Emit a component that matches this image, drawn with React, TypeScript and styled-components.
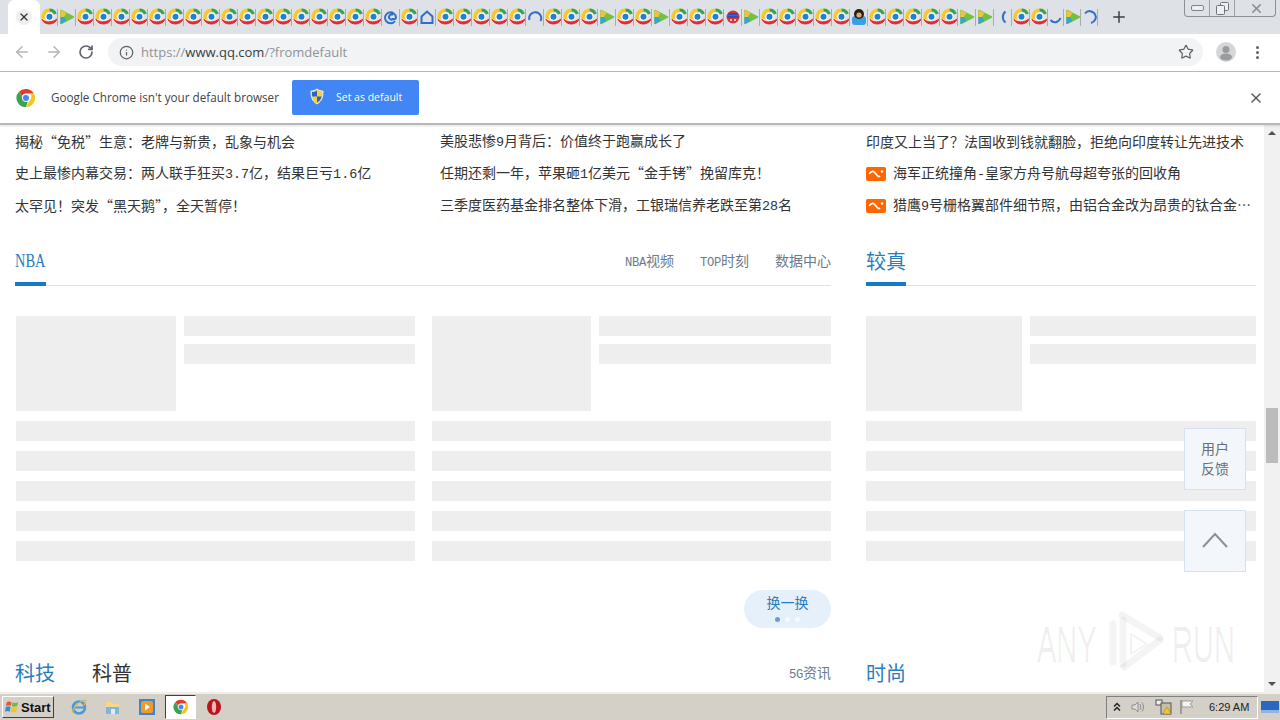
import React from 'react';
import styled, { createGlobalStyle } from 'styled-components';
import { ArrowLeft, ArrowRight, RotateCw, Info, Star, X, Plus } from 'lucide-react';

const CJK = `"Noto Sans CJK SC", "Liberation Sans", sans-serif`;
const MONO = `"Liberation Mono", "Noto Sans CJK SC", monospace`;
const UI = `"Open Sans", "Liberation Sans", sans-serif`;

const Global = createGlobalStyle`
  html, body { margin: 0; padding: 0; background: #fff; }
  * { box-sizing: border-box; }
`;

const Screen = styled.div`
  width: 1280px;
  height: 720px;
  display: flex;
  flex-direction: column;
  overflow: hidden;
  font-family: ${CJK};
`;

/* browser chrome */
const TabStrip = styled.div`
  height: 34px;
  flex: none;
  display: flex;
  background: #dee1e6;
  padding-left: 8px;
`;
const ActiveTab = styled.div`
  width: 32px;
  height: 34px;
  background: #fff;
  border-radius: 6px 6px 0 0;
  display: flex;
  align-items: center;
  justify-content: center;
  color: #333;
`;
const CloseDot = styled.div`
  width: 16px;
  height: 16px;
  border-radius: 50%;
  background: #eceef0;
  display: flex;
  align-items: center;
  justify-content: center;
`;
const IconTab = styled.div<{ $w?: number }>`
  width: ${(p) => p.$w ?? 18}px;
  height: 34px;
  flex: none;
  display: flex;
  align-items: center;
  justify-content: center;
  position: relative;
  &::after {
    content: '';
    position: absolute;
    right: 0;
    top: 9px;
    width: 1px;
    height: 17px;
    background: #a7abb2;
  }
`;
const NewTab = styled.div`
  width: 20px;
  height: 34px;
  margin-left: 11px;
  display: flex;
  align-items: center;
  justify-content: center;
  color: #3c4043;
`;
const WindowButtons = styled.div`
  margin-left: auto;
  margin-right: 4px;
  width: 92px;
  height: 17px;
  display: grid;
  grid-template-columns: 25px 25px 42px;
  border: 1px solid #8b8f96;
  border-top: none;
  border-radius: 0 0 4px 4px;
`;
const WindowButton = styled.div`
  display: flex;
  align-items: center;
  justify-content: center;
  border-right: 1px solid #9ca0a7;
  &:last-child { border-right: none; }
`;
const Toolbar = styled.div`
  height: 38px;
  flex: none;
  display: flex;
  align-items: center;
  background: #fff;
  border-bottom: 1px solid #b9b9b9;
  padding-bottom: 1px;
`;
const NavButton = styled.div<{ $dim?: boolean }>`
  width: 32px;
  height: 28px;
  display: flex;
  align-items: center;
  justify-content: center;
  color: ${(p) => (p.$dim ? '#b3b6ba' : '#5f6368')};
`;
const NavGroup = styled.div`
  width: 108px;
  padding-left: 6px;
  display: flex;
`;
const Omnibox = styled.div`
  width: 1095px;
  height: 28px;
  border-radius: 14px;
  background: #f1f3f4;
  display: flex;
  align-items: center;
  padding: 0 9px 0 11px;
  color: #5f6368;
`;
const Url = styled.div`
  margin: -1px 0 0 7px;
  font-family: ${UI};
  font-size: 13px;
  color: #90949a;
  b { font-weight: 400; color: #3a3d40; }
`;
const StarSlot = styled.div`
  margin-left: auto;
  display: flex;
`;
const Avatar = styled.div`
  width: 20px;
  height: 20px;
  margin-left: 13px;
  border-radius: 50%;
  background: #d5d6d8;
  overflow: hidden;
  display: flex;
`;
const MenuDots = styled.div`
  margin-left: 20px;
  display: flex;
  flex-direction: column;
  gap: 2px;
  i { width: 3px; height: 3px; border-radius: 50%; background: #5f6368; display: block; }
`;
const InfoBar = styled.div`
  height: 53px;
  flex: none;
  position: relative;
  z-index: 2;
  display: flex;
  align-items: center;
  padding: 0 16px;
  background: #fff;
  border-bottom: 2px solid #b8b8b8;
  box-shadow: 0 1px 2px rgba(0, 0, 0, 0.12);
`;
const InfoText = styled.div`
  margin: 0 0 2px 15px;
  width: 228px;
  font-family: ${UI};
  font-size: 11.7px;
  color: #444;
  white-space: nowrap;
`;
const DefaultButton = styled.div`
  margin-left: 13px;
  width: 127px;
  height: 35px;
  border-radius: 2px;
  background: #4285f4;
  color: #fff;
  display: flex;
  align-items: center;
  padding: 0 0 2px 17px;
  font-family: ${UI};
  font-size: 10.5px;
  gap: 11px;
`;
const InfoClose = styled.div`
  margin-left: auto;
  display: flex;
  color: #5a5a5a;
`;

/* page */
const PageArea = styled.div`
  flex: 1;
  min-height: 0;
  display: flex;
  position: relative;
  background: #fff;
`;
const Content = styled.div`
  width: 1264px;
  padding-left: 15px;
  overflow: hidden;
`;
const NewsRow = styled.div`
  display: grid;
  grid-template-columns: 425px 426px 386px;
`;
const NewsColumn = styled.div`
  min-width: 0;
`;
const NewsItem = styled.div`
  height: 32px;
  padding-top: 1px;
  line-height: 31px;
  font-size: 14px;
  color: #333;
  display: flex;
  align-items: center;
  white-space: nowrap;
`;
const NewsText = styled.span`
  min-width: 0;
  overflow: hidden;
  text-overflow: ellipsis;
`;
const Latin = styled.span`
  font-family: ${MONO};
  font-size: 13.4px;
`;
const SmallLatin = styled.span`
  font-family: ${MONO};
  font-size: 12.2px;
  letter-spacing: -0.3px;
`;
const PlayBadge = styled.span`
  width: 20px;
  height: 14px;
  flex: none;
  margin-right: 7px;
  border-radius: 2px;
  background: #f60;
  display: flex;
  align-items: center;
  justify-content: center;
`;
const Sections = styled.div`
  display: grid;
  grid-template-columns: 816px 390px;
  column-gap: 35px;
  margin-top: 17px;
`;
const HeaderRow = styled.div<{ $top?: number }>`
  height: 48px;
  margin-top: ${(p) => p.$top ?? 0}px;
  display: flex;
  border-bottom: 1px solid #d8e3ef;
`;
const Title = styled.div<{ $muted?: boolean; $off?: boolean }>`
  height: 48px;
  line-height: 45px;
  font-size: 20px;
  color: ${(p) => (p.$muted ? '#333' : '#2b7cbc')};
  margin-right: ${(p) => (p.$off ? 0 : 37)}px;
  border-bottom: ${(p) => (p.$off ? 'none' : '4px solid #1478ce')};
`;
const LatinTitle = styled(Title)`
  width: 31px;
  font-family: "Liberation Serif", serif;
  font-size: 19px;
  line-height: 46px;
  span {
    display: inline-block;
    transform: scaleX(0.76);
    transform-origin: left center;
  }
`;
const HeaderLinks = styled.div`
  margin-left: auto;
  display: flex;
  gap: 26px;
  line-height: 45px;
  font-size: 14px;
  color: #6b7b8c;
`;
const Blocks = styled.div`
  display: flex;
  gap: 17px;
  padding-left: 1px;
`;
const Block = styled.div<{ $wide?: boolean }>`
  width: ${(p) => (p.$wide ? '390px' : '399px')};
  padding-top: 30px;
  display: flex;
  flex-direction: column;
  gap: 10px;
`;
const MediaRow = styled.div`
  display: flex;
  gap: 8px;
`;
const Thumb = styled.div<{ $w: number }>`
  width: ${(p) => p.$w}px;
  height: 95px;
  flex: none;
  background: #eee;
`;
const MediaBars = styled.div`
  flex: 1;
  display: flex;
  flex-direction: column;
  gap: 8px;
`;
const Bar = styled.div`
  height: 20px;
  background: #eee;
`;
const PillRow = styled.div`
  display: flex;
  justify-content: flex-end;
  margin-top: 29px;
`;
const Pill = styled.div`
  width: 87px;
  height: 38px;
  border-radius: 19px;
  background: #e6f0fa;
  color: #2b7cbc;
  font-size: 14px;
  line-height: 14px;
  padding-top: 5px;
  text-align: center;
`;
const PillDots = styled.div`
  display: flex;
  justify-content: center;
  gap: 5px;
  margin-top: 8px;
`;
const PillDot = styled.i<{ $on?: boolean }>`
  width: 5px;
  height: 5px;
  border-radius: 50%;
  display: block;
  background: ${(p) => (p.$on ? '#6f9bd6' : '#f6f9fd')};
`;

/* scrollbar */
const ScrollTrack = styled.div`
  width: 16px;
  flex: none;
  background: #f1f1f1;
  display: flex;
  flex-direction: column;
  align-items: center;
`;
const ScrollArrow = styled.div<{ $down?: boolean }>`
  width: 16px;
  height: 16px;
  flex: none;
  margin-top: ${(p) => (p.$down ? 'auto' : '0')};
  display: flex;
  align-items: center;
  justify-content: center;
  &::before {
    content: '';
    border-left: 4px solid transparent;
    border-right: 4px solid transparent;
    ${(p) => (p.$down ? 'border-top: 4px solid #505050;' : 'border-bottom: 4px solid #505050;')}
  }
`;
const ScrollThumb = styled.div`
  width: 12px;
  height: 55px;
  margin-top: 267px;
  background: #bcbcbc;
`;

/* floating parts */
const FloatBox = styled.div<{ $top: number }>`
  position: absolute;
  left: 1184px;
  top: ${(p) => p.$top}px;
  width: 62px;
  height: 62px;
  padding-bottom: 3px;
  background: #f3f7fc;
  border: 1px solid #d6e1ef;
  display: flex;
  align-items: center;
  justify-content: center;
  font-size: 14px;
  line-height: 20px;
  color: #6a6f75;
  text-align: center;
`;
const Watermark = styled.div`
  position: absolute;
  left: 1037px;
  top: 485px;
  height: 62px;
  display: flex;
  align-items: center;
  gap: 7px;
  pointer-events: none;
`;
const WatermarkWord = styled.div`
  width: 63px;
  margin-top: 8px;
  span {
    display: inline-block;
    font-family: "Liberation Sans", sans-serif;
    font-size: 50px;
    line-height: 50px;
    white-space: nowrap;
    color: rgba(0, 0, 0, 0.06);
    -webkit-text-stroke: 1px rgba(0, 0, 0, 0.05);
    transform: scaleX(0.58);
    transform-origin: left center;
  }
`;

/* taskbar */
const Taskbar = styled.div`
  height: 28px;
  flex: none;
  display: flex;
  align-items: center;
  background: #d4d0c8;
  border-top: 2px solid #f1efe9;
`;
const StartButton = styled.div`
  width: 52px;
  height: 22px;
  margin-left: 2px;
  display: flex;
  align-items: center;
  padding-left: 1px;
  border: 1px solid;
  border-color: #fff #404040 #404040 #fff;
  font-family: "Liberation Sans", sans-serif;
  font-weight: 700;
  font-size: 13px;
  color: #111;
`;
const QuickLaunch = styled.div`
  margin-left: 8px;
  display: flex;
  align-items: center;
`;
const QuickItem = styled.div<{ $active?: boolean; $w?: number }>`
  width: ${(p) => p.$w ?? 34}px;
  height: 24px;
  display: flex;
  align-items: center;
  justify-content: center;
  ${(p) =>
    p.$active
      ? 'background: #fff; border: 1px solid; border-color: #404040 #fff #fff #404040; margin-left: 1px;'
      : ''}
`;
const Tray = styled.div`
  margin-left: auto;
  width: 152px;
  height: 23px;
  display: flex;
  align-items: center;
  border: 1px solid;
  border-color: #808080 #fff #fff #808080;
  padding-left: 6px;
`;
const TrayIcon = styled.div<{ $w: number }>`
  width: ${(p) => p.$w}px;
  display: flex;
  justify-content: center;
`;
const Clock = styled.div`
  margin-left: 8px;
  font-family: "Liberation Sans", sans-serif;
  font-size: 11px;
  color: #222;
  white-space: nowrap;
`;
const DesktopSlot = styled.div`
  margin: 0 1px 0 3px;
  display: flex;
`;

/* drawings */
const QQ = () => (
  <svg width="17" height="18" viewBox="0 0 17 18">
    <path d="M2.4 11C1 6 4.5 2.2 8.5 2.2" fill="none" stroke="#f4c92e" strokeWidth="3.4" />
    <path d="M8.5 2c2.800 0 4.800 1.400 5.800 4" fill="none" stroke="#3aa34a" strokeWidth="3.2" />
    <circle cx="8.5" cy="8.8" r="4" fill="#fff" />
    <circle cx="8.5" cy="8.8" r="3" fill="#1c82d0" />
    <path d="M1 11.500c3 3 10 3.600 15-.5-1.500 5.800-12 7.200-15 .5z" fill="#e42a2a" stroke="#e42a2a" />
  </svg>
);
const Play = () => (
  <svg width="16" height="18" viewBox="0 0 16 18">
    <path d="M2 2.500L14.500 9 2 15.500z" fill="#74c044" stroke="#74c044" strokeWidth="1.5" strokeLinejoin="round" />
    <path d="M1.500 2l6 3.100L5 9H1.500z" fill="#f3c23c" />
    <path d="M1.500 16l6-3.100L5 9H1.500z" fill="#36a4d8" />
  </svg>
);
const Arc = ({ d }: { d: string }) => (
  <svg width="16" height="18" viewBox="0 0 16 18">
    <path d={d} fill="none" stroke="#2f6fcb" strokeWidth="2" />
  </svg>
);
const Ball = () => (
  <svg width="16" height="18" viewBox="0 0 16 18">
    <circle cx="8" cy="9" r="6.5" fill="#d8323f" />
    <path d="M3 6h10M2.500 9h11" stroke="#2a52b8" strokeWidth="2" />
    <circle cx="6" cy="12" r="1" fill="#fff" />
    <circle cx="10" cy="12" r="1" fill="#fff" />
  </svg>
);
const Person = () => (
  <svg width="16" height="18" viewBox="0 0 16 18">
    <rect x="1" y="8" width="14" height="9" rx="3" fill="#35a0e6" />
    <circle cx="8" cy="6" r="5" fill="#2a1c10" />
    <circle cx="8" cy="7" r="2.6" fill="#e0a878" />
  </svg>
);

const tabIcon = (k: string) => {
  if (k === 'p') return <Play />;
  if (k === 'a') return <Arc d="M12 13a5.500 5.500 0 1 1 1-3.500c0 2-3 2.500-3 .5M10 7a2.500 2.500 0 1 0 0 4" />;
  if (k === 'h') return <Arc d="M2.500 8.500L8 3.500l5.500 5v6.500h-11z" />;
  if (k === 'c') return <Arc d="M2.500 12a6 6 0 1 1 11 1" />;
  if (k === 'l') return <Arc d="M10.500 3.500a7 7 0 0 0 0 11" />;
  if (k === 'j') return <Arc d="M2.500 12c3 3.500 8 3 10-2" />;
  if (k === 'o') return <Arc d="M3 5.500a6 6 0 1 1 6 9.500" />;
  if (k === 'r') return <Ball />;
  if (k === 'u') return <Person />;
  return <QQ />;
};

const TABS = 'qp' + 'q'.repeat(17) + 'aqhqqqqqcqqqpqqpqqqrpqqqqquqqqqqpplqqjpo';

const ChromeLogo = ({ size }: { size: number }) => (
  <svg width={size} height={size} viewBox="0 0 20 20">
    <path d="M10 1a9 9 0 0 1 7.800 4.500H10a4.500 4.500 0 0 0-4.200 2.900L3 3.800A9 9 0 0 1 10 1z" fill="#e33b2e" />
    <path d="M17.800 5.500A9 9 0 0 1 10 19l3.900-6.800a4.500 4.500 0 0 0 0-6.700z" fill="#f5c518" />
    <path d="M10 19A9 9 0 0 1 3 3.800l3.900 6.700a4.500 4.500 0 0 0 4.900 3.100z" fill="#3ba350" />
    <circle cx="10" cy="10" r="3.6" fill="#4285f4" stroke="#fff" strokeWidth="1" />
  </svg>
);
const Shield = () => (
  <svg width="16" height="17" viewBox="0 0 16 17">
    <path d="M8 1c2 1.500 4 2 6 2 0 6-1 10-6 13C3 13 2 9 2 3c2 0 4-.5 6-2z" fill="#f6d23c" stroke="#e8eef8" />
    <path d="M8 2.500v6H3.200C3 6.500 3 5 3 4c2 0 3.500-.5 5-1.500zM8 8.500h4.600c-.5 2.500-2 4.500-4.600 6z" fill="#2d63c8" />
  </svg>
);
const WaveBadge = () => (
  <svg width="16" height="10" viewBox="0 0 16 10">
    <path d="M1 5c3-4 5-3 7 0s3 3 4 2" fill="none" stroke="#fff" strokeWidth="1.6" />
    <circle cx="14" cy="2.5" r="1.2" fill="#fff" />
  </svg>
);
const TopChevron = () => (
  <svg width="26" height="16" viewBox="0 0 26 16">
    <path d="M1 15L13 2l12 13" fill="none" stroke="#8c8f93" strokeWidth="2" />
  </svg>
);
const WatermarkLogo = () => (
  <svg width="58" height="62" viewBox="0 0 58 62" fill="none" strokeLinecap="round" strokeLinejoin="round">
    <g stroke="rgba(0,0,0,.045)" strokeWidth="7">
      <path d="M6 14v38" />
      <path d="M15 5l38 23" />
      <path d="M53 30L17 57" />
      <path d="M16 10v44" />
    </g>
    <path d="M24 24v20l16-10z" stroke="rgba(0,0,0,.05)" strokeWidth="2" />
  </svg>
);
const WinFlag = () => (
  <svg width="17" height="16" viewBox="0 0 18 16">
    <path d="M3 3c2-1 3-1 5 0l-1 4c-2-1-3-1-5 0z" fill="#e8562a" />
    <path d="M9 3c2 1 3 1 6 0l-1 4c-2 1-4 1-6 0z" fill="#7cb83a" />
    <path d="M2 8c2-1 3-1 5 0l-1 5c-2-1-3-1-5 0z" fill="#3b88d6" />
    <path d="M8 8c2 1 4 1 6 0l-1 5c-2 1-4 1-6 0z" fill="#f2c230" />
  </svg>
);
const IeIcon = () => (
  <svg width="18" height="18" viewBox="0 0 18 18">
    <circle cx="9" cy="9.5" r="6" fill="none" stroke="#4a9ad8" strokeWidth="2.6" />
    <path d="M3 9.500h12" stroke="#4a9ad8" strokeWidth="2" />
    <path d="M3 15C1 12 9 3 15 2c2 1 0 4-1 5" fill="none" stroke="#e4b63a" strokeWidth="1.2" />
  </svg>
);
const FolderIcon = () => (
  <svg width="18" height="18" viewBox="0 0 18 18">
    <path d="M2 4h5l2 2h6v9H2z" fill="#f3d98a" />
    <path d="M2 9h13v7H2z" fill="#7db8dc" />
    <rect x="7" y="11" width="4" height="5" fill="#dcecf5" />
  </svg>
);
const MediaIcon = () => (
  <svg width="18" height="18" viewBox="0 0 18 18">
    <rect x="1" y="1" width="16" height="16" fill="#3f86c8" />
    <rect x="3" y="3" width="12" height="12" rx="2" fill="#f09a2a" />
    <path d="M7 5.500l5 3.500-5 3.500z" fill="#fff" />
  </svg>
);
const OperaIcon = () => (
  <svg width="16" height="18" viewBox="0 0 16 18">
    <ellipse cx="8" cy="9" rx="7" ry="8" fill="#b8141c" />
    <ellipse cx="8" cy="9" rx="2.2" ry="6" fill="#f0b4b4" />
  </svg>
);
const TrayChevrons = () => (
  <svg width="8" height="10" viewBox="0 0 8 10" fill="none" stroke="#222" strokeWidth="1.5">
    <path d="M1 4.500L4 1.500l3 3M1 8.500l3-3 3 3" />
  </svg>
);
const Speaker = () => (
  <svg width="16" height="16" viewBox="0 0 16 16" fill="none" stroke="#8f8f8f">
    <path d="M2 6h3l3-3v10l-3-3H2z" fill="#ddd" />
    <path d="M10 5c1 2 1 4 0 6M12 3.500c2 3 2 6 0 9" />
  </svg>
);
const NetworkIcon = () => (
  <svg width="18" height="18" viewBox="0 0 18 18">
    <rect x="1" y="2" width="6" height="5" fill="#eee" stroke="#555" />
    <rect x="6" y="5" width="10" height="11" fill="#c4c0a8" stroke="#555" />
    <path d="M12 9l4 7H8z" fill="#f6c81e" stroke="#9a7a10" strokeWidth=".5" />
  </svg>
);
const FlagIcon = () => (
  <svg width="16" height="16" viewBox="0 0 16 16">
    <path d="M2 1v14" stroke="#666" />
    <path d="M3 2h11l-3 3 3 3H3z" fill="#f4f4f4" stroke="#999" />
  </svg>
);
const DesktopIcon = () => (
  <svg width="18" height="12" viewBox="0 0 18 12">
    <rect width="18" height="12" fill="#2b66c0" />
    <rect y="9" width="18" height="3" fill="#8fb4e4" />
  </svg>
);

const Skeleton = ({ thumb }: { thumb: number }) => (
  <>
    <MediaRow>
      <Thumb $w={thumb} />
      <MediaBars>
        <Bar />
        <Bar />
      </MediaBars>
    </MediaRow>
    {[0, 1, 2, 3, 4].map((i) => (
      <Bar key={i} />
    ))}
  </>
);

const App = () => {
  return (
    <Screen>
      <Global />
      <TabStrip>
        <ActiveTab>
          <CloseDot>
            <X size={12} strokeWidth={2.5} />
          </CloseDot>
        </ActiveTab>
        {TABS.split('').map((k, i) => (
          <IconTab key={i} $w={i >= TABS.length - 2 ? 17 : i === TABS.length - 3 ? 16 : 18}>
            {tabIcon(k)}
          </IconTab>
        ))}
        <NewTab>
          <Plus size={18} strokeWidth={2} />
        </NewTab>
        <WindowButtons>
          <WindowButton>
            <svg width="13" height="6" viewBox="0 0 13 6">
              <rect x=".5" y=".5" width="12" height="5" rx="1.5" fill="#eef0f2" stroke="#7c8087" />
            </svg>
          </WindowButton>
          <WindowButton>
            <svg width="13" height="13" viewBox="0 0 13 13" fill="#eef0f2" stroke="#6f737a">
              <rect x="4.5" y=".5" width="8" height="8" rx="1" />
              <rect x=".5" y="3.5" width="8" height="9" rx="1" />
            </svg>
          </WindowButton>
          <WindowButton>
            <X size={15} color="#8a8e95" strokeWidth={2.5} />
          </WindowButton>
        </WindowButtons>
      </TabStrip>

      <Toolbar>
        <NavGroup>
          <NavButton $dim>
            <ArrowLeft size={18} />
          </NavButton>
          <NavButton $dim>
            <ArrowRight size={18} />
          </NavButton>
          <NavButton>
            <RotateCw size={16} strokeWidth={2.5} />
          </NavButton>
        </NavGroup>
        <Omnibox>
          <Info size={15} />
          <Url>
            https://<b>www.qq.com</b>/?fromdefault
          </Url>
          <StarSlot>
            <Star size={16} strokeWidth={1.8} />
          </StarSlot>
        </Omnibox>
        <Avatar>
          <svg width="20" height="20" viewBox="0 0 20 20">
            <circle cx="10" cy="7.5" r="3.5" fill="#9a9b9d" />
            <ellipse cx="10" cy="15" rx="6" ry="3.5" fill="#9a9b9d" />
          </svg>
        </Avatar>
        <MenuDots>
          <i />
          <i />
          <i />
        </MenuDots>
      </Toolbar>

      <InfoBar>
        <ChromeLogo size={20} />
        <InfoText>Google Chrome isn't your default browser</InfoText>
        <DefaultButton>
          <Shield />
          Set as default
        </DefaultButton>
        <InfoClose>
          <X size={16} strokeWidth={2.2} />
        </InfoClose>
      </InfoBar>

      <PageArea>
        <Content>
          <NewsRow>
            <NewsColumn>
              <NewsItem>揭秘“免税”生意&#xFF1A;老牌与新贵&#xFF0C;乱象与机会</NewsItem>
              <NewsItem>
                <span>
                  史上最惨内幕交易&#xFF1A;两人联手狂买<Latin>3.7</Latin>亿&#xFF0C;结果巨亏<Latin>1.6</Latin>亿
                </span>
              </NewsItem>
              <NewsItem>太罕见&#xFF01;突发“黑天鹅”&#xFF0C;全天暂停&#xFF01;</NewsItem>
            </NewsColumn>
            <NewsColumn>
              <NewsItem>
                <span>
                  美股悲惨<Latin>9</Latin>月背后&#xFF1A;价值终于跑赢成长了
                </span>
              </NewsItem>
              <NewsItem>
                <span>
                  任期还剩一年&#xFF0C;苹果砸<Latin>1</Latin>亿美元“金手铐”挽留库克&#xFF01;
                </span>
              </NewsItem>
              <NewsItem>
                <span>
                  三季度医药基金排名整体下滑&#xFF0C;工银瑞信养老跌至第<Latin>28</Latin>名
                </span>
              </NewsItem>
            </NewsColumn>
            <NewsColumn>
              <NewsItem>印度又上当了&#xFF1F;法国收到钱就翻脸&#xFF0C;拒绝向印度转让先进技术</NewsItem>
              <NewsItem>
                <PlayBadge>
                  <WaveBadge />
                </PlayBadge>
                <NewsText>
                  海军正统撞角<Latin>-</Latin>皇家方舟号航母超夸张的回收角
                </NewsText>
              </NewsItem>
              <NewsItem>
                <PlayBadge>
                  <WaveBadge />
                </PlayBadge>
                <NewsText>
                  猎鹰<Latin>9</Latin>号栅格翼部件细节照&#xFF0C;由铝合金改为昂贵的钛合金材料制造
                </NewsText>
              </NewsItem>
            </NewsColumn>
          </NewsRow>

          <Sections>
            <HeaderRow>
              <LatinTitle>
                <span>NBA</span>
              </LatinTitle>
              <HeaderLinks>
                <span>
                  <SmallLatin>NBA</SmallLatin>视频
                </span>
                <span>
                  <SmallLatin>TOP</SmallLatin>时刻
                </span>
                <span>数据中心</span>
              </HeaderLinks>
            </HeaderRow>
            <HeaderRow>
              <Title>较真</Title>
            </HeaderRow>

            <div>
              <Blocks>
                <Block>
                  <Skeleton thumb={160} />
                </Block>
                <Block>
                  <Skeleton thumb={159} />
                </Block>
              </Blocks>
              <PillRow>
                <Pill>
                  换一换
                  <PillDots>
                    <PillDot $on />
                    <PillDot />
                    <PillDot />
                  </PillDots>
                </Pill>
              </PillRow>
            </div>
            <div>
              <Block $wide>
                <Skeleton thumb={156} />
              </Block>
            </div>

            <HeaderRow $top={22}>
              <Title>科技</Title>
              <Title $muted $off>
                科普
              </Title>
              <HeaderLinks>
                <span>
                  <SmallLatin>5G</SmallLatin>资讯
                </span>
              </HeaderLinks>
            </HeaderRow>
            <HeaderRow $top={22}>
              <Title>时尚</Title>
            </HeaderRow>
          </Sections>
        </Content>

        <ScrollTrack>
          <ScrollArrow />
          <ScrollThumb />
          <ScrollArrow $down />
        </ScrollTrack>

        <FloatBox $top={303}>
          用户
          <br />
          反馈
        </FloatBox>
        <FloatBox $top={385}>
          <TopChevron />
        </FloatBox>
        <Watermark>
          <WatermarkWord>
            <span>ANY</span>
          </WatermarkWord>
          <WatermarkLogo />
          <WatermarkWord>
            <span>RUN</span>
          </WatermarkWord>
        </Watermark>
      </PageArea>

      <Taskbar>
        <StartButton>
          <WinFlag />
          Start
        </StartButton>
        <QuickLaunch>
          <QuickItem>
            <IeIcon />
          </QuickItem>
          <QuickItem>
            <FolderIcon />
          </QuickItem>
          <QuickItem>
            <MediaIcon />
          </QuickItem>
          <QuickItem $active $w={31}>
            <ChromeLogo size={16} />
          </QuickItem>
          <QuickItem $w={36}>
            <OperaIcon />
          </QuickItem>
        </QuickLaunch>
        <Tray>
          <TrayIcon $w={8}>
            <TrayChevrons />
          </TrayIcon>
          <TrayIcon $w={34}>
            <Speaker />
          </TrayIcon>
          <TrayIcon $w={18}>
            <NetworkIcon />
          </TrayIcon>
          <TrayIcon $w={28}>
            <FlagIcon />
          </TrayIcon>
          <Clock>6:29 AM</Clock>
        </Tray>
        <DesktopSlot>
          <DesktopIcon />
        </DesktopSlot>
      </Taskbar>
    </Screen>
  );
};

export default App;
